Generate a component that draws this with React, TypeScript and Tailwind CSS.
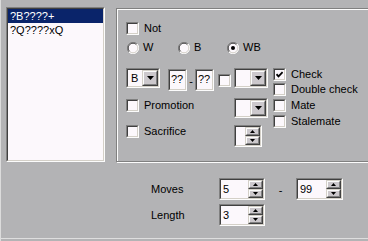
import React from "react";

type P = { className?: string; inner?: string; children?: React.ReactNode };

function Sunken({ className = "", inner = "", children }: P) {
  return (
    <div className={`border border-t-[#808080] border-l-[#808080] border-b-[#fcfcfc] border-r-[#fcfcfc] ${className}`}>
      <div className={`h-full w-full border border-t-[#404040] border-l-[#404040] border-b-[#d4d0c8] border-r-[#d4d0c8] bg-[#fcf8fc] ${inner}`}>
        {children}
      </div>
    </div>
  );
}

function Raised({ className = "", children }: P) {
  return (
    <div className={`border border-t-[#d4d0c8] border-l-[#d4d0c8] border-b-[#404040] border-r-[#404040] ${className}`}>
      <div className="flex h-full w-full items-center justify-center border border-t-[#fcfcfc] border-l-[#fcfcfc] border-b-[#808080] border-r-[#808080] bg-[#ccc8cc]">
        {children}
      </div>
    </div>
  );
}

function Down() {
  return (
    <svg width="7" height="4" viewBox="0 0 7 4">
      <path d="M0 0 H7 L3.5 4 Z" fill="#000" />
    </svg>
  );
}

function Small({ up }: { up?: boolean }) {
  return (
    <svg width="5" height="3" viewBox="0 0 5 3">
      {up ? <path d="M0 3 H5 L2.5 0 Z" fill="#000" /> : <path d="M0 0 H5 L2.5 3 Z" fill="#000" />}
    </svg>
  );
}

function Check({ checked, className = "" }: { checked?: boolean; className?: string }) {
  return (
    <Sunken className={`h-[13px] w-[13px] shrink-0 ${className}`} inner="flex items-center justify-center">
      {checked && (
        <svg width="7" height="7" viewBox="0 0 7 7">
          <polyline points="0.5,3.2 2.5,5.4 6.6,1.2" fill="none" stroke="#000" strokeWidth="1.8" />
        </svg>
      )}
    </Sunken>
  );
}

function Radio({ checked }: { checked?: boolean }) {
  return (
    <div className="flex h-[13px] w-[13px] shrink-0 items-center justify-center">
      <svg width="12" height="12" viewBox="0 0 12 12">
        <circle cx="6" cy="6" r="5.5" fill="#fcf8fc" />
        <path d="M1.9 10.1 A5.8 5.8 0 0 1 10.1 1.9" fill="none" stroke="#808080" strokeWidth="1" />
        <path d="M10.1 1.9 A5.8 5.8 0 0 1 1.9 10.1" fill="none" stroke="#fcfcfc" strokeWidth="1" />
        <path d="M2.6 9.4 A4.8 4.8 0 0 1 9.4 2.6" fill="none" stroke="#404040" strokeWidth="1" />
        <path d="M9.4 2.6 A4.8 4.8 0 0 1 2.6 9.4" fill="none" stroke="#d4d0c8" strokeWidth="1" />
        {checked && <circle cx="6" cy="6" r="2" fill="#000" />}
      </svg>
    </div>
  );
}

function Combo({ className = "", value = "" }: { className?: string; value?: string }) {
  return (
    <Sunken className={className} inner="flex">
      <div className="flex flex-1 items-center pl-[3px]">{value}</div>
      <Raised className="h-full w-[16px]">
        <Down />
      </Raised>
    </Sunken>
  );
}

function Spin({ className = "", value = "" }: { className?: string; value?: string }) {
  return (
    <Sunken className={className} inner="flex">
      <div className="flex flex-1 items-center pl-[2px]">{value}</div>
      <div className="flex h-full w-[15px] flex-col">
        <Raised className="h-1/2 w-full">
          <Small up />
        </Raised>
        <Raised className="h-1/2 w-full">
          <Small />
        </Raised>
      </div>
    </Sunken>
  );
}

function CheckRow({ label, checked, className = "" }: { label: string; checked?: boolean; className?: string }) {
  return (
    <div className={`flex h-[13px] items-center ${className}`}>
      <Check checked={checked} />
      <span className="ml-[5px] whitespace-nowrap">{label}</span>
    </div>
  );
}

export default function App() {
  return (
    <div
      className="flex h-[241px] w-[368px] flex-col overflow-hidden border-l border-l-[#dcdcdc] bg-[#b3b3b5] text-[11px] leading-none text-black"
      style={{ fontFamily: '"Liberation Sans", Arial, sans-serif' }}
    >
      <div className="flex pl-[5px] pt-[7px]">
        <Sunken className="h-[155px] w-[99px] shrink-0">
          <div className="flex h-[14px] items-center bg-[#0a246a] pl-[2px] text-white">?B????+</div>
          <div className="flex h-[14px] items-center pl-[2px]">?Q????xQ</div>
        </Sunken>
        <div className="ml-[11px] mt-[1px] h-[154px] w-[270px] shrink-0 border border-[#808080] shadow-[inset_1px_1px_0_#fcfcfc,1px_1px_0_#fcfcfc]">
          <div className="pl-[9px] pt-[13px]">
            <CheckRow label="Not" />
            <div className="mt-[6px] flex h-[13px] items-center">
              <div className="flex w-[51px] items-center">
                <Radio />
                <span className="ml-[4px]">W</span>
              </div>
              <div className="flex w-[49px] items-center">
                <Radio />
                <span className="ml-[4px]">B</span>
              </div>
              <div className="flex items-center">
                <Radio checked />
                <span className="ml-[4px]">WB</span>
              </div>
            </div>
            <div className="mt-[14px] flex">
              <div className="w-[147px] shrink-0">
                <div className="flex h-[30px] items-start">
                  <Combo className="h-[20px] w-[34px]" value="B" />
                  <Sunken className="ml-[8px] mt-[1px] h-[22px] w-[19px]" inner="pl-[1px] pt-[3px]">
                    ??
                  </Sunken>
                  <div className="mt-[8px] w-[8px] text-center">-</div>
                  <Sunken className="mt-[1px] h-[22px] w-[19px]" inner="pl-[1px] pt-[3px]">
                    ??
                  </Sunken>
                  <Check className="ml-[4px] mt-[6px]" />
                  <Combo className="ml-[3px] h-[20px] w-[34px]" />
                </div>
                <div className="flex h-[26px] items-start">
                  <div className="w-[108px] pt-[1px]">
                    <CheckRow label="Promotion" />
                  </div>
                  <Combo className="h-[20px] w-[34px]" />
                </div>
                <div className="flex items-start">
                  <div className="w-[108px] pt-[1px]">
                    <CheckRow label="Sacrifice" />
                  </div>
                  <Spin className="mt-[1px] h-[22px] w-[28px]" />
                </div>
              </div>
              <div className="flex flex-col">
                <CheckRow label="Check" checked />
                <CheckRow label="Double check" className="mt-[2px]" />
                <CheckRow label="Mate" className="mt-[3px]" />
                <CheckRow label="Stalemate" className="mt-[3px]" />
              </div>
            </div>
          </div>
        </div>
      </div>
      <div className="pl-[150px]">
        <div className="mt-[16px] flex h-[22px] items-center">
          <div className="w-[68px]">Moves</div>
          <Spin className="h-[22px] w-[46px]" value="5" />
          <div className="w-[31px] pt-[3px] text-center">-</div>
          <Spin className="h-[22px] w-[47px]" value="99" />
        </div>
        <div className="mt-[4px] flex h-[22px] items-center">
          <div className="w-[68px]">Length</div>
          <Spin className="h-[22px] w-[46px]" value="3" />
        </div>
      </div>
      <div className="mb-[2px] mt-auto h-px bg-[#dedede]" />
    </div>
  );
}
